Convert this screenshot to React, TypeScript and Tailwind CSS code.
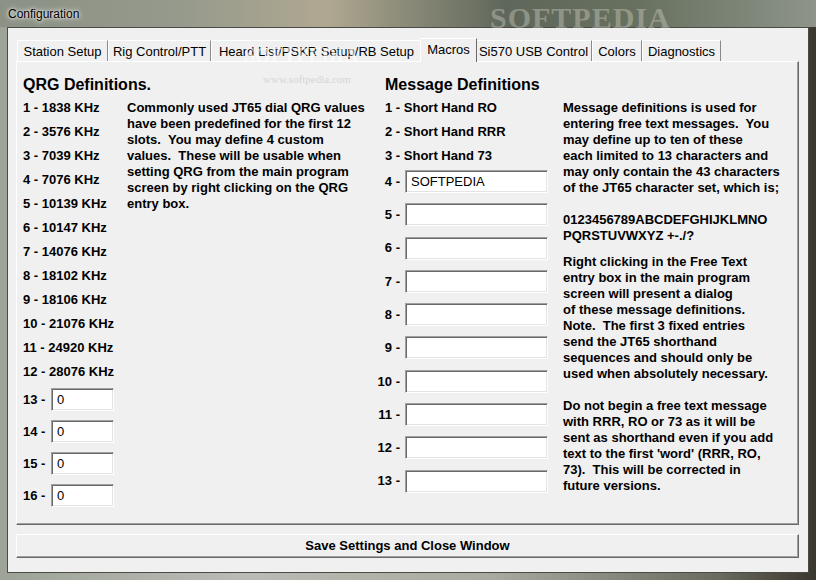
import React from "react";

type Tab = { label: string; cls: string; active?: boolean };

const tabs: Tab[] = [
  { label: "Station Setup", cls: "w-[91px]" },
  { label: "Rig Control/PTT", cls: "w-[103px]" },
  { label: "Heard List/PSKR Setup/RB Setup", cls: "w-[211px]" },
  { label: "Macros", cls: "w-[57px]", active: true },
  { label: "Si570 USB Control", cls: "w-[117px]" },
  { label: "Colors", cls: "w-[50px]" },
  { label: "Diagnostics", cls: "w-[79px]" },
];

const qrg = [
  "1 - 1838 KHz",
  "2 - 3576 KHz",
  "3 - 7039 KHz",
  "4 - 7076 KHz",
  "5 - 10139 KHz",
  "6 - 10147 KHz",
  "7 - 14076 KHz",
  "8 - 18102 KHz",
  "9 - 18106 KHz",
  "10 - 21076 KHz",
  "11 - 24920 KHz",
  "12 - 28076 KHz",
];

const customQrg = ["13", "14", "15", "16"];
const msgRows = [
  { n: "4", v: "SOFTPEDIA" },
  { n: "5", v: "" },
  { n: "6", v: "" },
  { n: "7", v: "" },
  { n: "8", v: "" },
  { n: "9", v: "" },
  { n: "10", v: "" },
  { n: "11", v: "" },
  { n: "12", v: "" },
  { n: "13", v: "" },
];

// caixa de texto "afundada" estilo Win32
function Field({ value, className }: { value: string; className: string }) {
  return (
    <input
      type="text"
      defaultValue={value}
      readOnly
      className={`h-[23px] bg-white pl-[5px] text-[13px] text-black outline-none border border-t-[#a0a0a0] border-l-[#a0a0a0] border-b-white border-r-white shadow-[inset_1px_1px_0_#696969,inset_-1px_-1px_0_#e3e3e3] font-['Liberation_Sans',Arial,sans-serif] ${className}`}
    />
  );
}

export default function App() {
  return (
    <div className="relative w-[816px] h-[580px] flex flex-col overflow-hidden bg-[linear-gradient(90deg,#9ea39a_0%,#b9bcb4_30%,#a9aaa2_60%,#6b6a5e_88%,#3a382e_100%)] font-['Liberation_Sans',Arial,sans-serif] select-none">
      {/* barra de título (aero) */}
      <div className="relative h-[27px] shrink-0 flex items-center pl-[8px] bg-[linear-gradient(90deg,#8b9185_0%,#969a8c_22%,#b0a891_40%,#8a8a78_50%,#5f675b_62%,#68705f_78%,#7f877a_92%,#8e948a_100%)]">
        <span className="text-[12px] text-black [text-shadow:0_0_6px_#fff,0_0_3px_#fff]">Configuration</span>
        <span className="absolute left-[490px] top-[3px] text-[30px] leading-none font-bold tracking-[1px] text-[#e4e4d8]/35 font-['Liberation_Serif',serif] pointer-events-none">
          SOFTPEDIA
        </span>
      </div>

      {/* área cliente */}
      <div className="flex-1 mx-[7px] mb-[7px] border border-[#4b4b45] bg-[#f0f0f0] flex flex-col">
        {/* abas */}
        <div className="h-[33px] flex items-end pl-[9px] relative">
          {tabs.map((t) =>
            t.active ? (
              <div
                key={t.label}
                className={`relative z-10 -mx-[2px] -mb-[1px] h-[24px] ${t.cls} flex items-start justify-center pt-[1px] bg-[#f0f0f0] border-t border-l border-white border-r border-r-[#696969] text-[13px] text-black`}
              >
                {t.label}
              </div>
            ) : (
              <div
                key={t.label}
                className={`h-[21px] ${t.cls} shrink-0 flex items-center justify-center pt-[1px] bg-[#f0f0f0] border-t border-l border-white border-r border-r-[#8a8a8a] text-[13px] text-black`}
              >
                {t.label}
              </div>
            )
          )}
          <span className="absolute left-[236px] top-[17px] text-[20px] leading-none font-bold text-white/60 font-['Liberation_Serif',serif] pointer-events-none">
            SOFTPEDIA
          </span>
        </div>

        {/* painel da aba Macros */}
        <div className="relative ml-[8px] mr-[9px] h-[464px] border-t border-l border-white border-b border-r border-b-[#696969] border-r-[#696969] shadow-[inset_-1px_-1px_0_#a0a0a0] flex pt-[13px] text-black">
          <span className="absolute left-[246px] top-[9px] text-[11px] text-[#d6d6d6] font-['Liberation_Serif',serif] pointer-events-none">
            www.softpedia.com
          </span>

          {/* QRG */}
          <div className="w-[355px] pl-[6px] flex flex-col">
            <h2 className="text-[16px] leading-[20px] font-bold">QRG Definitions.</h2>
            <div className="flex mt-[1px]">
              <div className="w-[104px] flex flex-col">
                {qrg.map((q) => (
                  <div key={q} className="text-[13px] leading-[24px] font-bold whitespace-nowrap">
                    {q}
                  </div>
                ))}
                <div className="mt-[4px] flex flex-col gap-[9px]">
                  {customQrg.map((n) => (
                    <div key={n} className="flex items-center">
                      <span className="w-[28px] text-[13px] font-bold whitespace-nowrap">{n} -</span>
                      <Field value="0" className="w-[63px]" />
                    </div>
                  ))}
                </div>
              </div>
              <p className="pt-[4px] text-[13px] leading-[16px] font-bold whitespace-nowrap">
                Commonly used JT65 dial QRG values
                <br />
                have been predefined for the first 12
                <br />
                slots.&nbsp; You may define 4 custom
                <br />
                values.&nbsp; These will be usable when
                <br />
                setting QRG from the main program
                <br />
                screen by right clicking on the QRG
                <br />
                entry box.
              </p>
            </div>
          </div>

          {/* mensagens */}
          <div className="w-[191px] flex flex-col">
            <h2 className="pl-[13px] text-[16px] leading-[20px] font-bold">Message Definitions</h2>
            <div className="mt-[1px] pl-[13px] flex flex-col">
              <div className="text-[13px] leading-[24px] font-bold">1 - Short Hand RO</div>
              <div className="text-[13px] leading-[24px] font-bold">2 - Short Hand RRR</div>
              <div className="text-[13px] leading-[24px] font-bold">3 - Short Hand 73</div>
            </div>
            <div className="mt-[2px] flex flex-col gap-[10.3px]">
              {msgRows.map((r) => (
                <div key={r.n} className="flex items-center">
                  <span className="w-[28px] text-right text-[13px] font-bold whitespace-nowrap">{r.n} -</span>
                  <Field value={r.v} className="ml-[5px] w-[143px]" />
                </div>
              ))}
            </div>
          </div>

          {/* texto de ajuda */}
          <div className="flex-1 pt-[25px] text-[13px] leading-[16px] font-bold whitespace-nowrap">
            <p>
              Message definitions is used for
              <br />
              entering free text messages.&nbsp; You
              <br />
              may define up to ten of these
              <br />
              each limited to 13 characters and
              <br />
              may only contain the 43 characters
              <br />
              of the JT65 character set, which is;
              <br />
              <br />
              0123456789ABCDEFGHIJKLMNO
              <br />
              PQRSTUVWXYZ +-./?
            </p>
            <p className="mt-[10px]">
              Right clicking in the Free Text
              <br />
              entry box in the main program
              <br />
              screen will present a dialog
              <br />
              of these message definitions.
              <br />
              Note.&nbsp; The first 3 fixed entries
              <br />
              send the JT65 shorthand
              <br />
              sequences and should only be
              <br />
              used when absolutely necessary.
            </p>
            <p className="mt-[16px]">
              Do not begin a free text message
              <br />
              with RRR, RO or 73 as it will be
              <br />
              sent as shorthand even if you add
              <br />
              text to the first 'word' (RRR, RO,
              <br />
              73).&nbsp; This will be corrected in
              <br />
              future versions.
            </p>
          </div>
        </div>

        <button className="mt-[9px] ml-[8px] mr-[9px] h-[24px] flex items-center justify-center bg-[#f0f0f0] border-t border-l border-white border-b border-r border-b-[#696969] border-r-[#696969] shadow-[inset_-1px_-1px_0_#a0a0a0] text-[13px] font-bold text-black">
          Save Settings and Close Window
        </button>
      </div>
    </div>
  );
}
